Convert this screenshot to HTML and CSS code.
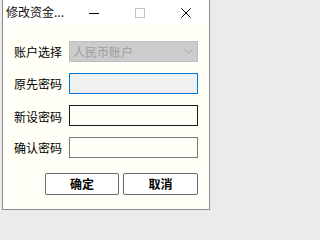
FILE: index.html
```html
<!DOCTYPE html>
<html lang="zh-CN">
<head>
<meta charset="utf-8">
<title>修改资金密码</title>
<link rel="stylesheet" href="styles.css">
</head>
<body>
<div class="window">
  <div class="titlebar">
    <div class="title">修改资金...</div>
    <div class="cap">
      <svg width="10" height="10" viewBox="0 0 10 10"><path d="M0 5.5H10" stroke="#000" stroke-width="1"/></svg>
    </div>
    <div class="cap">
      <svg width="10" height="10" viewBox="0 0 10 10"><rect x="0.5" y="0.5" width="9" height="9" fill="none" stroke="#c4c4c4" stroke-width="1"/></svg>
    </div>
    <div class="cap">
      <svg width="10" height="10" viewBox="0 0 10 10"><path d="M0.3 0.3L9.7 9.7M9.7 0.3L0.3 9.7" stroke="#000" stroke-width="1"/></svg>
    </div>
  </div>
  <div class="content">
    <div class="form">
      <div class="label">账户选择</div>
      <div class="combo">
        <span class="combo-text">人民币账户</span>
        <svg class="chev" width="9" height="5" viewBox="0 0 9 5"><path d="M0.5 0.5L4.5 4.5L8.5 0.5" fill="none" stroke="#a5a5a5" stroke-width="1"/></svg>
      </div>
      <div class="label">原先密码</div>
      <input class="field field-focus" type="password">
      <div class="label shift">新设密码</div>
      <input class="field field-hover shift" type="password">
      <div class="label">确认密码</div>
      <input class="field" type="password">
    </div>
    <div class="actions">
      <button class="btn btn-ok">确定</button>
      <button class="btn btn-cancel">取消</button>
    </div>
  </div>
</div>
</body>
</html>
```

FILE: styles.css
```css
html, body {
  margin: 0;
  padding: 0;
}
body {
  width: 212px;
  height: 213px;
  overflow: hidden;
  background: #ebebeb;
  font-family: "Noto Sans CJK SC", "Noto Sans", sans-serif;
  font-size: 12px;
  color: #000;
}
.window {
  margin-left: 2px;
  width: 208px;
  height: 210px;
  box-sizing: border-box;
  border: 1px solid #8c8c8c;
  border-top: none;
  display: flex;
  flex-direction: column;
}
.titlebar {
  height: 24px;
  background: #ffffff;
  display: flex;
  align-items: center;
}
.title {
  flex: 1;
  padding-left: 3px;
  line-height: 24px;
  white-space: nowrap;
  color: #111;
}
.cap {
  width: 46px;
  height: 24px;
  display: flex;
  align-items: center;
  justify-content: center;
}
.cap svg {
  display: block;
  margin-top: 2px;
}
.content {
  flex: 1;
  background: #fffff7;
  padding: 17px 0 0 11px;
}
.form {
  display: grid;
  grid-template-columns: 48px 129px;
  column-gap: 7px;
  row-gap: 11px;
  grid-auto-rows: 21px;
  align-items: center;
}
.label {
  line-height: 21px;
  white-space: nowrap;
}
.shift {
  margin-top: 1px;
}
.combo {
  height: 21px;
  box-sizing: border-box;
  background: #cccccc;
  border: 1px solid #bebebe;
  display: flex;
  align-items: center;
  padding-left: 3px;
  padding-right: 4px;
}
.combo-text {
  flex: 1;
  color: #9c9c9c;
  line-height: 19px;
}
.chev {
  display: block;
}
.field {
  display: block;
  width: 129px;
  height: 21px;
  box-sizing: border-box;
  margin: 0;
  padding: 0;
  border: 1px solid #7a7a7a;
  background: #fffff7;
  outline: none;
}
.field-focus {
  border-color: #0078d7;
  background: #f0f0f0;
}
.field-hover {
  border-color: #1b1b1b;
}
.actions {
  width: 184px;
  margin-top: 15px;
  display: flex;
  justify-content: flex-end;
  gap: 4px;
}
.btn {
  height: 22px;
  box-sizing: border-box;
  margin: 0;
  padding: 0;
  border: 1px solid #6a6a6a;
  border-radius: 2px;
  background: #ffffff;
  font-family: "Noto Sans CJK SC", "Noto Sans", sans-serif;
  font-size: 12px;
  font-weight: 700;
  color: #000;
  line-height: 20px;
}
.btn-ok {
  width: 74px;
}
.btn-cancel {
  width: 75px;
}
```
